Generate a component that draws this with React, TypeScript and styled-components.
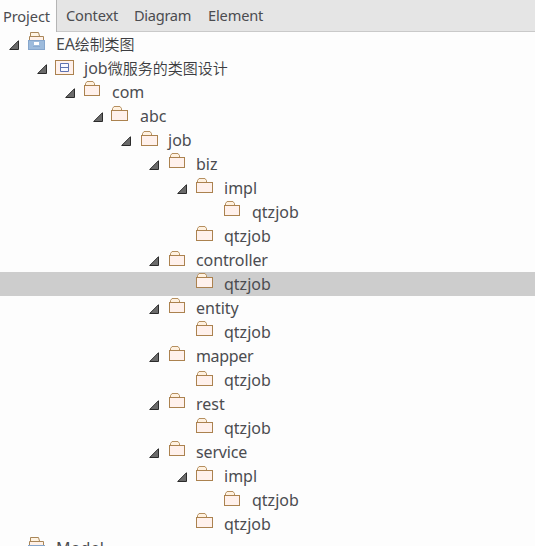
import React from "react";
import styled, { createGlobalStyle } from "styled-components";

const Global = createGlobalStyle`
  *{box-sizing:border-box}
  html,body{margin:0;overflow:hidden;background:#fdfdfd}
`;

const Window = styled.div`
  width: 535px;
  height: 546px;
  overflow: hidden;
  background: #fdfdfd;
  color: #4b4c50;
  font-family: "Noto Sans", "Noto Sans CJK SC", sans-serif;
`;

const TabBar = styled.div`
  display: flex;
  height: 32px;
  background: #e5e5e5;
  border-bottom: 1px solid #c9c9c9;
`;

const Tab = styled.div<{ $width: number; $active?: boolean; $spacing?: number }>`
  width: ${(p) => p.$width}px;
  height: ${(p) => (p.$active ? 32 : 31)}px;
  padding: ${(p) => (p.$active ? "1px 0 0 3px" : "0 0 0 9px")};
  background: ${(p) => (p.$active ? "#fdfdfd" : "transparent")};
  border-right: ${(p) => (p.$active ? "1px solid #b5b5b5" : "none")};
  font-size: 14.6px;
  line-height: 31px;
  letter-spacing: ${(p) => p.$spacing ?? 0}px;
  white-space: nowrap;
`;

const Tree = styled.div`
  display: flex;
  flex-direction: column;
`;

const Row = styled.div<{ $depth: number; $selected?: boolean }>`
  display: flex;
  flex: none;
  height: 24px;
  padding-left: ${(p) => p.$depth * 28}px;
  background: ${(p) => (p.$selected ? "#cdcdcd" : "transparent")};
`;

const ArrowCell = styled.div<{ $nudge: number }>`
  width: ${(p) => 27 + p.$nudge}px;
  padding: 8px 0 0 9px;
  svg { display: block; }
`;

const IconCell = styled.div<{ $top: number; $nudge: number }>`
  width: ${(p) => 29 - p.$nudge}px;
  padding-top: ${(p) => p.$top}px;
  svg { display: block; }
`;

const Label = styled.div<{ $spacing?: number }>`
  font-size: 16px;
  line-height: 25px;
  letter-spacing: ${(p) => p.$spacing ?? 0}px;
  white-space: nowrap;
`;

const Cjk = styled.span`
  color: #3c3d41;
  font-size: 15px;
  font-weight: 350;
`;

type Kind = "root" | "view" | "folder";
interface Node {
  label: string;
  cjk?: string;
  depth: number;
  top: number;
  nudge?: number;
  wide?: boolean;
  kind?: Kind;
  leaf?: boolean;
  selected?: boolean;
  spacing?: number;
}

const nodes: Node[] = [
  { label: "EA", cjk: "绘制类图", depth: 0, top: 0, nudge: 1, kind: "root", spacing: -0.15 },
  { label: "job", cjk: "微服务的类图设计", depth: 1, top: 4, kind: "view" },
  { label: "com", depth: 2, top: 1, nudge: 1 },
  { label: "abc", depth: 3, top: 2, wide: true },
  { label: "job", depth: 4, top: 3, nudge: 2, wide: true },
  { label: "biz", depth: 5, top: 1, nudge: 2 },
  { label: "impl", depth: 6, top: 2, nudge: 1, wide: true },
  { label: "qtzjob", depth: 7, top: 1, nudge: 1, leaf: true },
  { label: "qtzjob", depth: 6, top: 2, nudge: 1, wide: true, leaf: true },
  { label: "controller", depth: 5, top: 3, nudge: 2, spacing: -0.1 },
  { label: "qtzjob", depth: 6, top: 1, nudge: 1, wide: true, leaf: true, selected: true },
  { label: "entity", depth: 5, top: 2, nudge: 2 },
  { label: "qtzjob", depth: 6, top: 1, nudge: 1, wide: true, leaf: true },
  { label: "mapper", depth: 5, top: 2, nudge: 2, spacing: -0.35 },
  { label: "qtzjob", depth: 6, top: 3, nudge: 1, wide: true, leaf: true },
  { label: "rest", depth: 5, top: 1, nudge: 2 },
  { label: "qtzjob", depth: 6, top: 2, nudge: 1, wide: true, leaf: true },
  { label: "service", depth: 5, top: 1, nudge: 2, spacing: -0.15 },
  { label: "impl", depth: 6, top: 2, nudge: 1, wide: true },
  { label: "qtzjob", depth: 7, top: 3, nudge: 1, leaf: true },
  { label: "qtzjob", depth: 6, top: 1, nudge: 1, wide: true, leaf: true },
  { label: "Model", depth: 0, top: 1, nudge: 1, kind: "root", leaf: true, spacing: 0.2 },
];

const Arrow = () => (
  <svg width="10" height="10" viewBox="0 0 10 10">
    <path d="M0.7 9.5H9.5V0.7Z" fill="#6b6b6b" stroke="#2b2b2b" />
  </svg>
);

const Folder = ({ wide }: { wide?: boolean }) => {
  const w = wide ? 17 : 16;
  return (
    <svg width={w} height="15" viewBox={`0 0 ${w} 15`}>
      <path d="M1.5 4V2.5L3 0.5H9L10.5 2.5V4" fill="#fff1e0" stroke="#b58f5f" />
      <rect x="0.5" y="4.5" width={w - 1} height="10" fill="#fff1ec" stroke="#ab824f" />
    </svg>
  );
};

const RootIcon = () => (
  <svg width="17" height="18" viewBox="0 0 17 18">
    <path d="M2.5 4V0.5H10.5L11.5 4" fill="#fff4e4" stroke="#a98658" />
    <path d="M1.5 10V4.5H15.5V10" fill="#fff1e8" stroke="#a98658" />
    <rect x="0.5" y="8.5" width="16" height="9" fill="#9dbbdc" stroke="#86a6cc" />
    <rect x="6" y="10" width="5" height="3" fill="#fff" />
    <path d="M5 14.5H12" stroke="#8aaad0" />
  </svg>
);

const ViewIcon = () => (
  <svg width="19" height="15" viewBox="0 0 19 15">
    <rect x="0.5" y="0.5" width="18" height="14" fill="#fff1ec" stroke="#ab824f" />
    <path d="M5.5 3.5H13.5V11.5H5.5ZM5.5 7.5H13.5" fill="#f8f8ff" stroke="#5e72b0" />
  </svg>
);

export default function App() {
  return (
    <Window>
      <Global />
      <TabBar>
        <Tab $width={57} $active $spacing={-0.1}>Project</Tab>
        <Tab $width={68} $spacing={-0.15}>Context</Tab>
        <Tab $width={74} $spacing={-0.3}>Diagram</Tab>
        <Tab $width={80} $spacing={-0.15}>Element</Tab>
      </TabBar>
      <Tree>
        {nodes.map((n, i) => (
          <Row key={i} $depth={n.depth} $selected={n.selected}>
            <ArrowCell $nudge={n.nudge ?? 0}>{!n.leaf && <Arrow />}</ArrowCell>
            <IconCell $top={n.top} $nudge={n.nudge ?? 0}>
              {n.kind === "root" ? <RootIcon /> : n.kind === "view" ? <ViewIcon /> : <Folder wide={n.wide} />}
            </IconCell>
            <Label $spacing={n.spacing}>
              {n.label}
              {n.cjk && <Cjk>{n.cjk}</Cjk>}
            </Label>
          </Row>
        ))}
      </Tree>
    </Window>
  );
}
